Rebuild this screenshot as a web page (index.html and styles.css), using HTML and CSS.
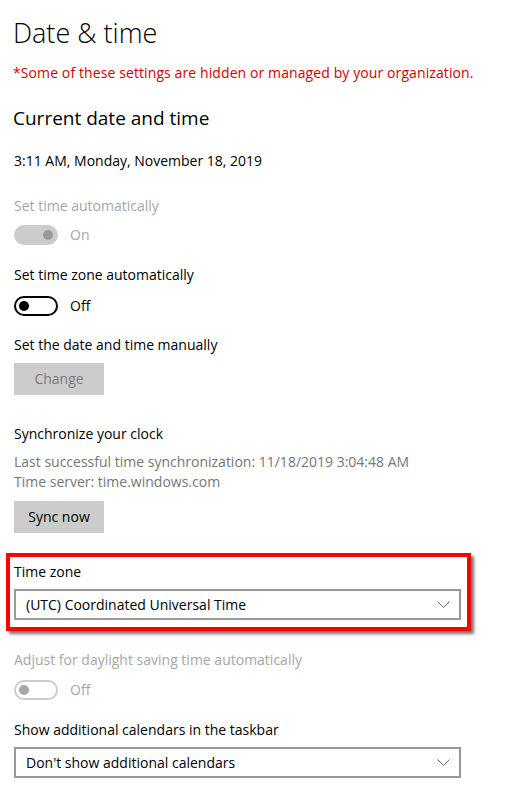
FILE: index.html
```html
<!DOCTYPE html>
<html>
<head>
<meta charset="utf-8">
<link rel="stylesheet" href="styles.css">
</head>
<body>
<div class="page">
  <h1 class="title">Date &amp; time</h1>
  <p class="notice">*Some of these settings are hidden or managed by your organization.</p>
  <h2 class="subtitle">Current date and time</h2>
  <p class="text now">3:11 AM, Monday, November 18, 2019</p>

  <p class="text label disabled gap-a">Set time automatically</p>
  <div class="toggle-row gap-t1">
    <span class="toggle toggle-on-disabled"><span class="knob"></span></span>
    <span class="toggle-text disabled">On</span>
  </div>

  <p class="text label gap-b">Set time zone automatically</p>
  <div class="toggle-row gap-t2">
    <span class="toggle toggle-off"><span class="knob"></span></span>
    <span class="toggle-text">Off</span>
  </div>

  <p class="text label gap-c">Set the date and time manually</p>
  <button class="btn btn-disabled gap-btn1">Change</button>

  <p class="text label gap-d">Synchronize your clock</p>
  <p class="text secondary gap-e">Last successful time synchronization: 11/18/2019 3:04:48 AM</p>
  <p class="text secondary">Time server: time.windows.com</p>
  <button class="btn gap-btn2">Sync now</button>

  <div class="highlight">
    <p class="text label">Time zone</p>
    <div class="select gap-sel">
      <span class="select-text">(UTC) Coordinated Universal Time</span>
      <svg class="chev" width="13" height="8" viewBox="0 0 13 8"><polyline points="0.5,0.5 6.5,6.5 12.5,0.5" fill="none" stroke="#6b6b6b" stroke-width="1"/></svg>
    </div>
  </div>

  <p class="text label disabled gap-f">Adjust for daylight saving time automatically</p>
  <div class="toggle-row gap-t3">
    <span class="toggle toggle-off-disabled"><span class="knob"></span></span>
    <span class="toggle-text disabled">Off</span>
  </div>

  <p class="text label gap-g">Show additional calendars in the taskbar</p>
  <div class="select gap-sel">
    <span class="select-text">Don't show additional calendars</span>
    <svg class="chev" width="13" height="8" viewBox="0 0 13 8"><polyline points="0.5,0.5 6.5,6.5 12.5,0.5" fill="none" stroke="#6b6b6b" stroke-width="1"/></svg>
  </div>
</div>
</body>
</html>
```
FILE: styles.css
```css
html, body {
  margin: 0;
  padding: 0;
  background: #ffffff;
}
body {
  font-family: "Open Sans", "Segoe UI", "Noto Sans", sans-serif;
  font-size: 14px;
  color: #000000;
}
.page {
  padding: 13px 0 0 14px;
  width: 500px;
}
p { margin: 0; }
.title {
  margin: 0 0 0 -1px;
  font-size: 27px;
  font-weight: 300;
  line-height: 40px;
}
.notice {
  margin-top: 10px;
  margin-left: -1px;
  color: #d10000;
  line-height: 20px;
  letter-spacing: 0.1px;
}
.subtitle {
  margin: 21px 0 0 -1px;
  font-size: 19px;
  font-weight: 400;
  line-height: 28px;
}
.text { line-height: 20px; }
.now { margin-top: 19px; }
.disabled { color: #a6a6a6; }
.secondary { color: #767676; }
.gap-a { margin-top: 25px; }
.gap-b { margin-top: 20px; }
.gap-c { margin-top: 19px; }
.gap-d { margin-top: 29px; }
.gap-e { margin-top: 8px; }
.gap-f { margin-top: 19px; }
.gap-g { margin-top: 20px; }
.gap-t1 { margin-top: 9px; }
.gap-t2 { margin-top: 11px; }
.gap-t3 { margin-top: 10px; }
.gap-btn1 { margin-top: 8px; }
.gap-btn2 { margin-top: 9px; }
.gap-sel { margin-top: 7px; }

.toggle-row {
  display: flex;
  align-items: center;
  gap: 12px;
  height: 20px;
}
.toggle {
  box-sizing: border-box;
  width: 44px;
  height: 20px;
  border-radius: 10px;
  display: flex;
  align-items: center;
  padding: 0 3px;
}
.knob {
  width: 10px;
  height: 10px;
  border-radius: 50%;
}
.toggle-on-disabled {
  background: #cccccc;
  justify-content: flex-end;
  padding: 0 5px;
}
.toggle-on-disabled .knob { background: #999999; }
.toggle-off {
  border: 2px solid #000000;
}
.toggle-off .knob { background: #000000; }
.toggle-off-disabled {
  border: 2px solid #cccccc;
}
.toggle-off-disabled .knob { background: #a6a6a6; }
.toggle-text { line-height: 20px; }

.btn {
  display: block;
  width: 90px;
  height: 32px;
  border: 0;
  background: #cccccc;
  font-family: inherit;
  font-size: 14px;
  color: #000000;
  padding: 0 0 2px;
}
.btn-disabled { color: #7a7a7a; }

.highlight {
  margin: 20px 0 0 -8px;
  width: 465px;
  box-sizing: border-box;
  border: 4px solid #ff0000;
  padding: 5px 6px 7px 4px;
  box-shadow: 3px 3px 3px rgba(0,0,0,0.55);
}
.select {
  box-sizing: border-box;
  width: 447px;
  height: 31px;
  border: 2px solid #999999;
  display: flex;
  align-items: center;
  justify-content: space-between;
  padding: 0 9px 0 10px;
}
.select-text { line-height: 20px; }
.chev { display: block; }
```
